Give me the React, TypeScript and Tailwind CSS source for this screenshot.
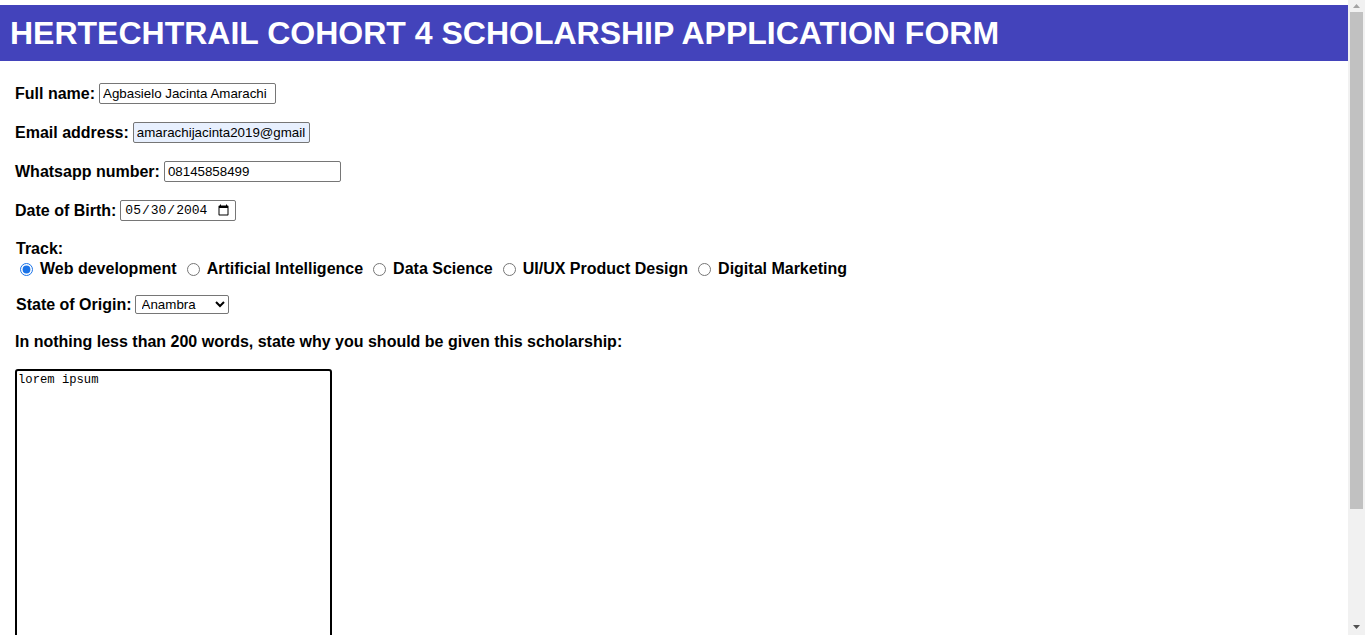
const tracks = [
  'Web development',
  'Artificial Intelligence',
  'Data Science',
  'UI/UX Product Design',
  'Digital Marketing',
]

const states = ['Anambra', 'Abia', 'Enugu', 'Imo', 'Lagos']

const label = 'font-bold text-[16px] text-black'
const field =
  'h-[21px] border border-[#767676] rounded-[2px] px-[3px] text-[13.33px] text-black outline-none'

export default function App() {
  return (
    <div
      className="flex h-[635px] w-full overflow-hidden bg-white"
      style={{ fontFamily: '"Liberation Sans", Arial, sans-serif' }}
    >
      <main className="flex-1 min-w-0 overflow-hidden pt-[5px]">
        <header className="h-[56px] bg-[#4343BB] px-[10px] flex items-center">
          <h1 className="text-white font-bold text-[32px] leading-none whitespace-nowrap">
            HERTECHTRAIL COHORT 4 SCHOLARSHIP APPLICATION FORM
          </h1>
        </header>

        <form className="flex flex-col items-start px-[15px] pt-[22px]">
          <div className="h-[21px] flex items-center gap-[4px]">
            <label className={label}>Full name:</label>
            <input type="text" defaultValue="Agbasielo Jacinta Amarachi" className={`${field} w-[177px]`} />
          </div>

          <div className="h-[21px] mt-[18px] flex items-center gap-[4px]">
            <label className={label}>Email address:</label>
            <input
              type="email"
              defaultValue="amarachijacinta2019@gmail.com"
              className={`${field} w-[177px] bg-[#E8F0FE]`}
            />
          </div>

          <div className="h-[21px] mt-[18px] flex items-center gap-[4px]">
            <label className={label}>Whatsapp number:</label>
            <input type="tel" defaultValue="08145858499" className={`${field} w-[177px]`} />
          </div>

          <div className="h-[21px] mt-[18px] flex items-center gap-[4px]">
            <label className={label}>Date of Birth:</label>
            <input
              type="date"
              defaultValue="2004-05-30"
              className={`${field} w-[116px] text-[13px]`}
              style={{ fontFamily: '"Liberation Mono", monospace' }}
            />
          </div>

          <div className="mt-[19px] pl-px h-[18px] leading-[18px]">
            <span className={label}>Track:</span>
          </div>
          <div className="mt-[2px] h-[18px] flex items-center">
            {tracks.map((t, i) => (
              <label key={t} className={`${label} flex items-center mr-[5px]`}>
                <input
                  type="radio"
                  name="track"
                  defaultChecked={i === 0}
                  className="w-[13px] h-[13px] ml-[5px] mr-[7px] accent-[#1a73e8]"
                />
                {t}
              </label>
            ))}
          </div>

          <div className="h-[19px] mt-[17px] pl-px flex items-center gap-[3px]">
            <label className={label}>State of Origin:</label>
            <select
              defaultValue="Anambra"
              className="h-[19px] w-[94px] border border-[#767676] rounded-[2px] text-[13.33px] text-black pl-[2px]"
            >
              {states.map((s) => (
                <option key={s}>{s}</option>
              ))}
            </select>
          </div>

          <p className={`${label} mt-[19px] h-[18px] leading-[18px]`}>
            In nothing less than 200 words, state why you should be given this scholarship:
          </p>

          <textarea
            defaultValue="lorem ipsum"
            className="mt-[18px] w-[317px] h-[300px] border-2 border-black rounded-[3px] px-px py-0 text-[12.2px] text-black resize-none"
            style={{ fontFamily: '"Liberation Mono", monospace' }}
          />
        </form>
      </main>

      {/* page scrollbar */}
      <aside className="w-[17px] shrink-0 bg-[#F1F1F1] flex flex-col items-center">
        <div className="h-[12px] w-full flex items-center justify-center">
          <svg width="7" height="4" viewBox="0 0 7 4">
            <path d="M3.5 0 L7 4 L0 4 Z" fill="#A3A3A3" />
          </svg>
        </div>
        <div className="w-[13px] h-[497px] bg-[#C1C1C1]" />
        <div className="flex-1" />
        <div className="h-[17px] w-full flex items-center justify-center">
          <svg width="7" height="4" viewBox="0 0 7 4">
            <path d="M0 0 L7 0 L3.5 4 Z" fill="#505050" />
          </svg>
        </div>
      </aside>
    </div>
  )
}
